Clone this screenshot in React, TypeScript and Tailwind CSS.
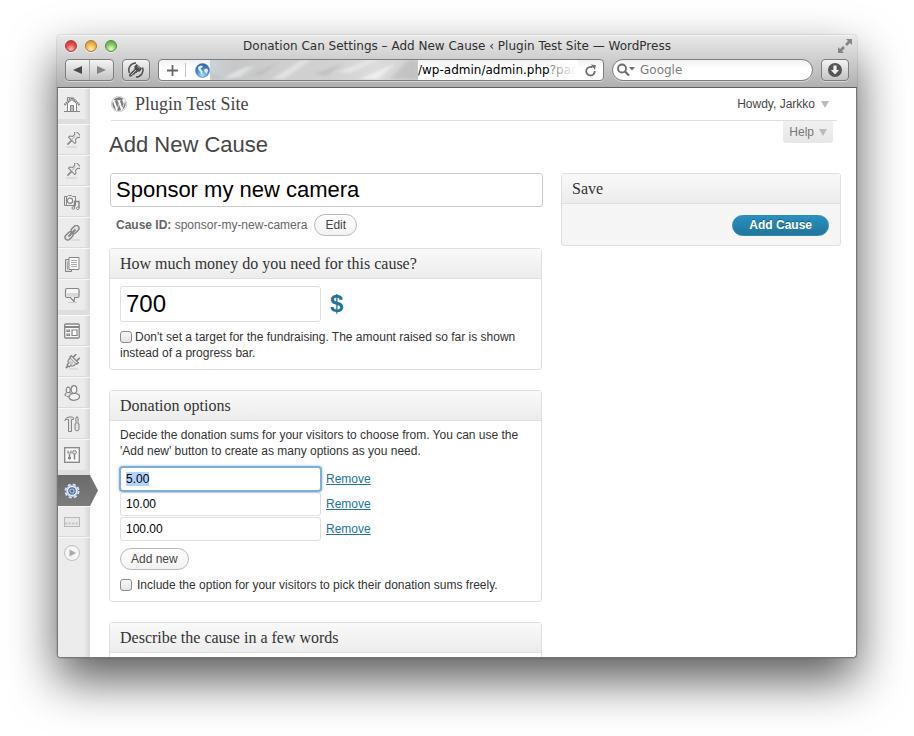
import { useEffect, useRef } from "react";
import type { ReactNode } from "react";
import { FaWordpress } from "react-icons/fa";

const SANS = "font-['Liberation_Sans',Arial,sans-serif]";
const SERIF = "font-['Liberation_Serif',Georgia,serif]";
const CHROME = "font-['DejaVu_Sans','Lucida_Grande',sans-serif]";

function Light({ tone, label }: { tone: string; label: string }) {
  return (
    <button
      type="button"
      aria-label={label}
      className={`size-3 rounded-full border shadow-[0_1px_0_rgba(255,255,255,0.6)] ${tone}`}
    />
  );
}

const toolButton =
  "flex h-[22px] items-center justify-center rounded-[4px] border border-[#7d7d7d] bg-linear-to-b from-[#f4f4f4] to-[#c3c3c3] shadow-[0_1px_0_rgba(255,255,255,0.45)]";

function Chrome() {
  return (
    <header
      className={`shrink-0 rounded-t-[4px] border-b border-[#5f5f5f] bg-linear-to-b from-[#e9e9e9] to-[#b0b0b0] shadow-[inset_0_1px_0_#f4f4f4] ${CHROME}`}
    >
      <div className="flex h-[22px] items-center gap-2 pr-1 pl-2">
        <Light
          label="Close"
          tone="border-[#9c4440] bg-[radial-gradient(circle_at_50%_80%,#ffc0b8_0%,#ea4a4a_50%,#bc2e30_100%)]"
        />
        <Light
          label="Minimise"
          tone="border-[#a8783a] bg-[radial-gradient(circle_at_50%_80%,#fff0b0_0%,#f5b54c_50%,#c98a2c_100%)]"
        />
        <Light
          label="Zoom"
          tone="border-[#4f8a45] bg-[radial-gradient(circle_at_50%_80%,#e2ffc4_0%,#86cc66_50%,#4f9a40_100%)]"
        />
        <h2 className="min-w-0 flex-1 truncate pr-10 text-center text-xs leading-5 text-[#303030]">
          Donation Can Settings – Add New Cause ‹ Plugin Test Site — WordPress
        </h2>
        <svg className="size-4 shrink-0" viewBox="0 0 16 16" fill="#858585">
          <path d="M9 1h6v6l-2-2-3 3-2-2 3-3zM7 15H1V9l2 2 3-3 2 2-3 3z" />
        </svg>
      </div>
      <div className="flex items-center gap-2 px-2 pt-[2px] pb-[6px]">
        <div className={`${toolButton} w-[49px]`}>
          <button type="button" aria-label="Back" className="flex flex-1 justify-center">
            <svg className="h-2 w-[9px]" viewBox="0 0 9 8" fill="#4a4a4a">
              <path d="M0 4 9 0v8z" />
            </svg>
          </button>
          <span className="h-full w-px bg-[#a5a5a5]" />
          <button type="button" aria-label="Forward" className="flex flex-1 justify-center">
            <svg className="h-2 w-[9px]" viewBox="0 0 9 8" fill="#858585">
              <path d="M9 4 0 0v8z" />
            </svg>
          </button>
        </div>
        <button type="button" aria-label="Passwords" className={`${toolButton} w-[28px]`}>
          <svg className="size-4" viewBox="0 0 16 16">
            <path
              d="M1.500 11A7 7 0 0 1 8 1M14.500 5.500A7 7 0 0 1 8 15"
              fill="none"
              stroke="#4f4f4f"
              strokeWidth="1.500"
            />
            <path
              d="M8.500 2 14 6.500 12 9.500 9.500 9.800 8.500 11 7.200 11.200 6.500 12.600 5 12.800 3.500 14.500H1.200L1 12.500 6.500 7 6.300 4.500z"
              fill="#4f4f4f"
            />
            <path d="M9.300 4 11.800 6M3 13.200 8 8" stroke="#d8d8d8" strokeWidth=".9" />
          </svg>
        </button>
        <div className="flex h-[22px] min-w-0 flex-1 items-center rounded-[4px] border border-[#7d7d7d] bg-linear-to-b from-[#f1f1f1] to-white to-40% shadow-[0_1px_0_rgba(255,255,255,0.45)]">
          <button type="button" aria-label="Add bookmark" className="flex w-[26px] justify-center">
            <svg className="size-[11px]" viewBox="0 0 11 11">
              <path d="M5.500 0v11M0 5.500h11" stroke="#666" strokeWidth="1.800" />
            </svg>
          </button>
          <span className="mr-[9px] h-[14px] w-px bg-[#c4c4c4]" />
          <svg className="size-[15px] shrink-0" viewBox="0 0 15 15">
            <defs>
              <radialGradient id="globe" cx=".5" cy=".85" r=".85">
                <stop offset="0" stopColor="#a5dcfa" />
                <stop offset=".5" stopColor="#4a92d4" />
                <stop offset="1" stopColor="#2a5ca6" />
              </radialGradient>
            </defs>
            <circle cx="7.500" cy="7.500" r="7" fill="url(#globe)" stroke="#4a7cb8" strokeWidth=".6" />
            <path
              d="M3 4 5.500 2.500 8 3 7 4.500 5.600 5.500 6 6.500 7.500 8 7.200 10.500 6 11.500 5.500 9 3.500 7zM9.500 6 12.500 5.500 13 8 11.500 11 10.500 9.500 9.200 8z"
              fill="#f1f9ff"
              opacity=".9"
            />
          </svg>
          <svg className="h-5 min-w-0 flex-1" viewBox="0 0 208 20" preserveAspectRatio="none">
            <defs>
              <linearGradient id="smudge" x1="0" x2="1">
                <stop offset="0" stopColor="#ccd3d7" />
                <stop offset=".12" stopColor="#c6c7c8" />
                <stop offset=".35" stopColor="#cfcfcf" />
                <stop offset=".6" stopColor="#d2d2d2" />
                <stop offset=".8" stopColor="#dcdcdc" />
                <stop offset="1" stopColor="#cfcfcf" />
              </linearGradient>
              <filter id="soften">
                <feGaussianBlur stdDeviation="2 1" />
              </filter>
            </defs>
            <rect width="208" height="20" fill="url(#smudge)" />
            <g filter="url(#soften)">
              <path d="M14 19Q26 8 44 6L30 17zM62 19 92 0h8L74 19zM128 12 158 0h10l-28 13z" fill="#f0f0f0" opacity=".6" />
              <path d="M0 19V12l14 7zM40 16 70 1 52 15zM104 14 134 3l-18 13zM180 19 198 1h10v18z" fill="#b4b4b4" opacity=".5" />
              <path d="M150 19 186 3l-18 16z" fill="#f3f3f3" opacity=".8" />
            </g>
          </svg>
          <div className="relative w-[160px] shrink-0">
            <input
              aria-label="Address"
              defaultValue="/wp-admin/admin.php?page"
              className="block w-full text-xs leading-5 text-black outline-none"
            />
            <span className="pointer-events-none absolute inset-y-0 right-0 w-[27px] bg-linear-to-r from-white/50 to-white to-95%" />
          </div>
          <button type="button" aria-label="Reload" className="flex w-[25px] justify-center">
            <svg className="size-[13px]" viewBox="0 0 13 13">
              <path d="M8.500 3.400A4.300 4.300 0 1 0 10.800 7" fill="none" stroke="#6c6c6c" strokeWidth="1.800" />
              <path d="M6.800 .5 11.800 1.200 11 6z" fill="#6c6c6c" />
            </svg>
          </button>
        </div>
        <div className="flex h-[22px] w-[201px] items-center rounded-full border border-[#7d7d7d] bg-linear-to-b from-[#f1f1f1] to-white to-40% pl-1 shadow-[0_1px_0_rgba(255,255,255,0.45)]">
          <svg className="h-[14px] w-[18px] shrink-0" viewBox="0 0 18 14">
            <circle cx="5" cy="5.500" r="4" fill="none" stroke="#6c6c6c" strokeWidth="1.800" />
            <path d="m8 8.500 4 4" stroke="#6c6c6c" strokeWidth="2.200" />
            <path d="M12 4h6l-3 3.500z" fill="#6c6c6c" />
          </svg>
          <input
            aria-label="Search the web"
            placeholder="Google"
            className="min-w-0 flex-1 px-[5px] text-xs leading-5 outline-none placeholder:text-[#7d7d7d]"
          />
        </div>
        <button type="button" aria-label="Downloads" className={`${toolButton} w-[28px]`}>
          <svg className="size-[14px]" viewBox="0 0 14 14">
            <circle cx="7" cy="7" r="7" fill="#555" />
            <path d="M5.400 2.500h3.200V7h2.500L7 11.500 2.900 7h2.500z" fill="#eee" />
          </svg>
        </button>
      </div>
    </header>
  );
}

const icons: Record<string, ReactNode> = {
  dashboard: (
    <>
      <path d="M3.500 7.500v8h9v-8L8 3.500z" fill="#f8f8f8" />
      <path d="M.5 9 8 1.500 15.500 9" fill="none" strokeWidth="2.200" strokeDasharray="1.600 .6" />
      <path d="M3.500 5V1.500h2v2M6.500 15.500v-6h3v6M0 15.500h16" fill="none" />
      <path d="M8 9.500v6" />
    </>
  ),
  pin: (
    <>
      <g transform="rotate(45 8 8)">
        <path d="M4.500 .5h7v2l-1.500 1v3l2.500 2v1.500h-9V8.500L6 6.500v-3l-1.500-1z" transform="translate(0 -1.500)" fill="#ececec" />
        <path d="M7.500 2.500v5" stroke="#bbb" />
        <path d="M8 8.500v6" strokeWidth="1.500" />
      </g>
      <path d="M2 15h11" stroke="#ccc" />
    </>
  ),
  media: (
    <>
      <path d="M.5 2.500v9h11v-9h-3l-1-1h-3l-1 1z" fill="#eee" />
      <circle cx="6" cy="6.800" r="2.600" fill="#fff" strokeWidth="1.200" />
      <path d="M2.500 3v8" />
      <path d="M10.500 13.500V7.500h4.500v6.500" fill="none" strokeWidth="1.400" />
      <circle cx="9.300" cy="14" r="1.300" fill="#eee" />
      <circle cx="13.800" cy="14.300" r="1.300" fill="#eee" />
    </>
  ),
  link: (
    <>
      <rect x="6.500" y="1.800" width="9" height="5.400" rx="2.700" transform="rotate(-45 11 4.500)" fill="#e4e4e4" strokeWidth="1.400" />
      <rect x=".5" y="8.300" width="9" height="5.400" rx="2.700" transform="rotate(-45 5 11)" fill="#e4e4e4" strokeWidth="1.400" />
      <path d="m4.500 11.500 7-7" strokeWidth="1.800" />
      <path d="M7 15h9" stroke="#ccc" />
    </>
  ),
  pages: (
    <>
      <path d="M1.500 3.500h6v12h-6z" fill="#ddd" />
      <path d="M5 1.500h10v12H5z" fill="#fafafa" />
      <path d="M7 4.500h6M7 6.500h6M7 8.500h6M7 10.500h6" stroke="#aaa" />
      <path d="M3.500 5.500v8" stroke="#aaa" />
    </>
  ),
  comments: (
    <>
      <path
        d="M3 1.500h10.500q1.500 0 1.500 1.500v6q0 1.500-1.500 1.500H10.500l-.5 4-3.500-4H3Q1.500 10.500 1.500 9V3Q1.500 1.500 3 1.500z"
        fill="#f6f6f6"
        strokeWidth="1.200"
      />
      <path d="M2.500 6h11.500v3.800h-11.500z" fill="#d9d9d9" stroke="none" />
      <path d="M4 15.500h9" stroke="#ccc" />
    </>
  ),
  appearance: (
    <>
      <rect x=".7" y="1" width="14.500" height="14" rx="1" fill="#f8f8f8" strokeWidth="1.300" />
      <path d="M1 3.500h14M1 4.500h14" />
      <path d="M3 7h2.500v1.500H3zM3 11h2.500v1.500H3zM8 7h5v5.500H8z" fill="#fff" strokeWidth="1.200" />
    </>
  ),
  plugins: (
    <>
      <g transform="rotate(45 8 8)">
        <path d="M5.500 4V-.5M10.500 4V-.5" strokeWidth="1.600" />
        <path d="M3 4h10v2h-1v2.500q0 2-2.500 3v2h-3v-2Q4 10.500 4 8.500V6H3z" fill="#e6e6e6" strokeWidth="1.200" />
        <path d="M5 6.500h6M7 8v3M9 8v3" stroke="#aaa" />
        <path d="M8 13.500v3" strokeWidth="2" />
      </g>
      <path d="M5 15h9" stroke="#ccc" />
    </>
  ),
  users: (
    <>
      <ellipse cx="4.200" cy="5" rx="2" ry="2.800" fill="#f3f3f3" strokeWidth="1.200" />
      <path d="M1 10Q1 7.500 4.500 7.500T8 10Q7 11.500 4.500 11.500T1 10z" fill="#eee" strokeWidth="1.200" />
      <ellipse cx="10" cy="4.500" rx="2.800" ry="3.800" fill="#f3f3f3" strokeWidth="1.200" />
      <path d="M5 12.500Q5 8.500 10.500 8.500T15.500 12.500Q14 15.300 10 15.300T5 12.500z" fill="#f3f3f3" strokeWidth="1.200" />
    </>
  ),
  tools: (
    <>
      <path d="M.8 4.500Q2 1 5 1h3.500l1 1V3.500H7.500v12h-3v-12Q2.500 3 .8 4.500z" fill="#e2e2e2" />
      <path d="M12.500 .8q-1.200 2-.5 4.500v2.500h-1v6q2 2.500 4 0v-6h-1V5.300q.7-2.500-.5-4.500z" fill="#e2e2e2" />
    </>
  ),
  settings: (
    <>
      <rect x=".7" y=".7" width="14.600" height="14.600" fill="#f8f8f8" strokeWidth="1.300" />
      <path d="M5.500 7v5.500M10.500 7v5.500" strokeWidth="1.500" />
      <path d="M4 3.500V6h3V3.500" fill="none" strokeWidth="1.200" />
      <circle cx="10.500" cy="5.300" r="1.900" fill="#ddd" />
      <path d="M4 11h3" strokeWidth="2" />
    </>
  ),
  gear: (
    <>
      <circle cx="8" cy="8" r="6" fill="#e3ecfb" stroke="#dfe9fb" strokeWidth="3" strokeDasharray="2.700 2.012" />
      <circle cx="8" cy="8" r="5.600" fill="#e3ecfb" stroke="#a9bce2" strokeWidth="1" />
      <circle cx="8" cy="8" r="3.200" fill="#b4c6ea" stroke="#4f6aa6" strokeWidth="1.200" />
      <circle cx="8" cy="8" r="1.500" fill="#666" stroke="none" />
    </>
  ),
  bar: (
    <>
      <rect x=".5" y="3.500" width="15" height="9" fill="#e8e8e8" stroke="#b9b9b9" />
      <path d="M1 9.500h14" stroke="#c9c9c9" strokeDasharray="2.500 1" strokeWidth="2" />
    </>
  ),
  play: (
    <>
      <circle cx="8" cy="8" r="7.500" fill="#f5f5f5" stroke="#bdbdbd" />
      <path d="M5.500 4.500 12 8l-6.500 3.500z" fill="#aaa" stroke="none" />
    </>
  ),
};

const groups: [string, string][][] = [
  [["dashboard", "Dashboard"]],
  [
    ["pin", "Posts"],
    ["pin", "Causes"],
    ["media", "Media"],
    ["link", "Links"],
    ["pages", "Pages"],
    ["comments", "Comments"],
  ],
  [
    ["appearance", "Appearance"],
    ["plugins", "Plugins"],
    ["users", "Users"],
    ["tools", "Tools"],
    ["settings", "Settings"],
  ],
  [
    ["gear", "Donation Can"],
    ["bar", "Widgets"],
    ["play", "Collapse menu"],
  ],
];

function Sidebar() {
  return (
    <nav className="w-8 shrink-0 bg-linear-to-r from-[#ececec] from-80% to-[#d6d6d6]">
      {groups.map((group, g) => (
        <ul key={g} className={g > 0 ? "border-t-5 border-[#dedede]" : ""}>
          {group.map(([icon, label], i) => (
            <li
              key={label}
              className={
                icon === "gear"
                  ? "relative h-[31px] bg-linear-to-b from-[#6a6a6a] to-[#7d7d7d]"
                  : i === group.length - 1
                    ? "h-[31px] border-t border-[#f8f8f8]"
                    : "h-[31px] border-t border-b border-t-[#f8f8f8] border-b-[#dadada]"
              }
            >
              <a href="#" aria-label={label} className="flex h-full items-center pl-[6px]">
                <svg className="size-4" viewBox="0 0 16 16" stroke="#858585" fill="none">
                  {icons[icon]}
                </svg>
              </a>
              {icon === "gear" && (
                <svg className="absolute top-0 left-full h-[31px] w-[8px]" viewBox="0 0 8 31">
                  <path d="M0 0 8 15.500 0 31z" fill="#747474" />
                </svg>
              )}
            </li>
          ))}
        </ul>
      ))}
    </nav>
  );
}

function Panel({ title, children, tone = "bg-white" }: { title: string; children?: ReactNode; tone?: string }) {
  return (
    <section className={`rounded-[3px] border border-[#dfdfdf] ${tone}`}>
      <h3
        className={`h-[30px] border-b border-[#dfdfdf] bg-linear-to-b from-[#f9f9f9] to-[#ececec] px-[10px] text-base leading-[30px] text-[#333] ${SERIF}`}
      >
        {title}
      </h3>
      {children}
    </section>
  );
}

const pill =
  "h-[22px] rounded-full border border-[#bbb] bg-linear-to-b from-white to-[#f2f2f2] px-[10px] text-xs leading-5 text-[#464646]";
const field = "block w-[201px] rounded-[3px] border border-[#dfdfdf] bg-white px-[5px] text-black outline-none";
const tick =
  "size-3 appearance-none rounded-[3px] border border-[#8e8e8e] bg-linear-to-b from-[#f6f6f6] to-[#e4e4e4]";

function DonationOptions() {
  const first = useRef<HTMLInputElement>(null);
  useEffect(() => {
    first.current?.focus();
    first.current?.select();
  }, []);
  return (
    <Panel title="Donation options">
      <div className="px-[10px] pt-[6px] pb-[8px]">
        <p className="leading-4">
          Decide the donation sums for your visitors to choose from. You can use the 'Add new' button to create as many
          options as you need.
        </p>
        <ul className="mt-[8px] flex flex-col gap-px">
          {["5.00", "10.00", "100.00"].map((sum, i) => (
            <li key={sum} className="flex items-center gap-[5px]">
              <input
                ref={i === 0 ? first : undefined}
                aria-label={`Donation sum ${i + 1}`}
                defaultValue={sum}
                className={`${field} h-6 text-xs selection:bg-[#b3d4fc] selection:text-black focus:relative focus:border-[#7eadd9] focus:shadow-[0_0_0_1px_#7eadd9,0_0_3px_1px_#8db9e2]`}
              />
              <a href="#" className="text-[#21759b] underline">
                Remove
              </a>
            </li>
          ))}
        </ul>
        <button type="button" className={`${pill} mt-[7px]`}>
          Add new
        </button>
        <label className="mt-[7px] flex h-4 items-center gap-[5px]">
          <input type="checkbox" className={tick} />
          Include the option for your visitors to pick their donation sums freely.
        </label>
      </div>
    </Panel>
  );
}

export default function App() {
  return (
    <div className={`flex h-screen overflow-hidden bg-white px-[57px] pt-[35px] pb-[78px] text-xs text-[#333] ${SANS}`}>
      <div className="flex min-w-0 flex-1 flex-col rounded-[4px] shadow-[0_22px_48px_rgba(0,0,0,0.65),0_0_1px_rgba(0,0,0,0.8)]">
        <Chrome />
        <div className="flex min-h-0 flex-1 overflow-hidden rounded-b-[4px] border-x border-b border-[#777] bg-white">
          <Sidebar />
          <main className="min-w-0 flex-1 pr-[15px] pl-[19px]">
            <div className="mr-1 ml-[2px] flex h-[33px] items-center gap-2 border-b border-[#dfdfdf]">
              <FaWordpress className="size-4 text-[#7c7c7c]" />
              <h1 className={`flex-1 text-lg text-[#464646] ${SERIF}`}>Plugin Test Site</h1>
              <button type="button" className="flex items-center gap-[6px] pr-2 text-[#464646]">
                Howdy, Jarkko
                <span className="h-0 w-0 border-x-4 border-t-[7px] border-x-transparent border-t-[#bbb]" />
              </button>
            </div>
            <div className="flex justify-between pr-2">
              <h2 className="pt-[9px] text-[22px] leading-[30px] text-[#464646]">Add New Cause</h2>
              <button
                type="button"
                className="flex h-[22px] items-center gap-[5px] rounded-b-[3px] bg-linear-to-b from-[#f1f1f1] to-[#e6e6e6] px-[6px] text-[#777]"
              >
                Help
                <span className="h-0 w-0 border-x-4 border-t-[7px] border-x-transparent border-t-[#bbb]" />
              </button>
            </div>
            <div className="mt-[13px] flex items-start gap-[19px]">
              <div className="min-w-0 flex-1">
                <input
                  aria-label="Cause name"
                  defaultValue="Sponsor my new camera"
                  className="ml-px block h-[34px] w-full rounded-[3px] border border-[#ccc] px-[5px] text-[22px] text-black outline-none"
                />
                <div className="mt-[7px] flex items-center gap-[7px] pl-[7px] text-[#666]">
                  <p>
                    <strong>Cause ID:</strong> sponsor-my-new-camera
                  </p>
                  <button type="button" className={pill}>
                    Edit
                  </button>
                </div>
                <div className="mt-3 flex flex-col gap-5">
                  <Panel title="How much money do you need for this cause?">
                    <div className="px-[10px] pt-[7px] pb-[8px]">
                      <div className="flex items-center gap-[9px]">
                        <input aria-label="Target sum" defaultValue="700" className={`${field} h-9 text-2xl`} />
                        <span className="text-2xl font-bold text-[#21759b]">$</span>
                      </div>
                      <label className="mt-[7px] block leading-4">
                        <input type="checkbox" className={`${tick} mr-[3px] align-[-2px]`} />
                        Don't set a target for the fundraising. The amount raised so far is shown instead of a progress
                        bar.
                      </label>
                    </div>
                  </Panel>
                  <DonationOptions />
                  <Panel title="Describe the cause in a few words">
                    <div className="h-20" />
                  </Panel>
                </div>
              </div>
              <aside className="w-[280px] shrink-0">
                <Panel title="Save" tone="bg-[#f5f5f5]">
                  <div className="flex justify-end px-[11px] pt-[11px] pb-[9px]">
                    <button
                      type="submit"
                      className="h-[21px] rounded-full border border-[#298cba] bg-linear-to-b from-[#2a8fbe] to-[#21759b] px-4 text-xs leading-[19px] font-bold text-white [text-shadow:0_-1px_0_rgba(0,0,0,0.3)]"
                    >
                      Add Cause
                    </button>
                  </div>
                </Panel>
              </aside>
            </div>
          </main>
        </div>
      </div>
    </div>
  );
}
